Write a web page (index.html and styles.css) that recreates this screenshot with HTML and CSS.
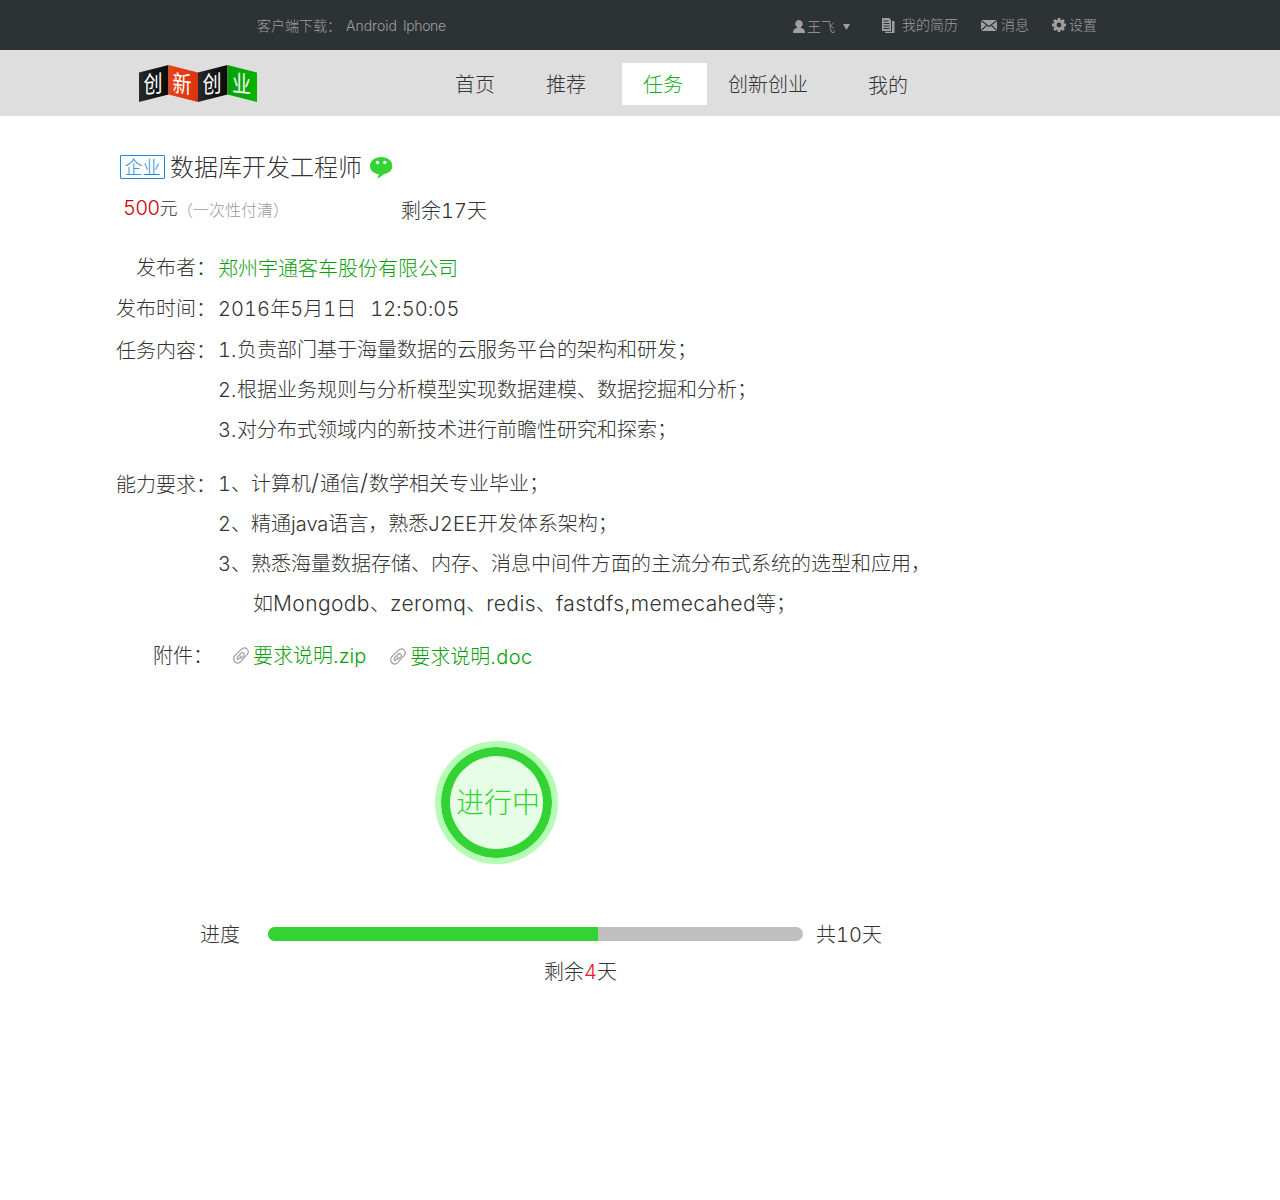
FILE: index.html
```html
<!DOCTYPE html>
<html lang="zh-CN">
<head>
<meta charset="utf-8">
<title>创新创业</title>
<link rel="stylesheet" href="styles.css">
</head>
<body>
<header class="topbar">
  <div class="download"><span>客户端下载：</span><span class="android">Android</span><span class="iphone">Iphone</span></div>
  <div class="user-links">
    <a class="user"><svg width="12" height="13" viewBox="0 0 12 13"><path d="M6 0a3.800 3.800 0 0 1 2.300 6.800Q7.500 7.500 8 8c2.800.5 4 2 4 5H0c0-3 1.200-4.500 4-5q.5-.5-.3-1.200A3.800 3.800 0 0 1 6 0z"/></svg><span>王飞</span><svg class="caret" width="7" height="6" viewBox="0 0 7 6"><path d="M0 0h7L3.500 6z"/></svg></a>
    <a class="resume"><svg width="13" height="15" viewBox="0 0 13 15"><path d="M0 0h7l2 2v11H0z"/><path d="M10 3h2.500v12H3v-1.200h7z"/><path class="cut" d="M1.500 3h5M1.500 5.500h6M1.500 8h6M1.500 10.500h6"/></svg><span>我的简历</span></a>
    <a class="message"><svg width="16" height="11" viewBox="0 0 16 11"><path d="M0 0h16v11H0z"/><path class="cut" d="M0 .5l8 6 8-6M0 10.500l5.500-5M16 10.500l-5.500-5"/></svg><span>消息</span></a>
    <a class="settings"><svg width="14" height="14" viewBox="-7 -7 14 14"><circle class="ring" r="3.900"/><path class="teeth" d="M0-7v3M0 4v3M-7 0h3M4 0h3M-5-5l2 2M3 3l2 2M5-5l-2 2M-3 3l-2 2"/></svg><span>设置</span></a>
  </div>
</header>
<nav class="nav">
  <svg class="logo" width="118" height="37" viewBox="0 0 118 37">
    <defs>
      <linearGradient id="black"><stop offset="0" stop-color="#2a2a2a"/><stop offset=".5" stop-color="#161616"/><stop offset="1" stop-color="#0c0c0c"/></linearGradient>
      <linearGradient id="red"><stop offset="0" stop-color="#ec4317"/><stop offset="1" stop-color="#d93410"/></linearGradient>
      <linearGradient id="green"><stop offset="0" stop-color="#08a008"/><stop offset="1" stop-color="#04b404"/></linearGradient>
    </defs>
    <path fill="url(#black)" d="M0 7.500L29.500 0v29.500L0 37z"/>
    <path fill="url(#red)" d="M29.500 0L59 7.500V37l-29.500-7.500z"/>
    <path fill="url(#black)" d="M59 7.500L88.500 0v29.500L59 37z"/>
    <path fill="url(#green)" d="M88.500 0L118 7.500V37l-29.500-7.500z"/>
    <text transform="matrix(.95 -.1 0 1.180 4.500 28.500)">创</text>
    <text transform="matrix(.95 .1 0 1.180 33.500 26.500)">新</text>
    <text transform="matrix(.95 -.1 0 1.180 63.500 28.500)">创</text>
    <text transform="matrix(.95 .1 0 1.180 93 26.500)">业</text>
  </svg>
  <a class="home">首页</a><a class="recommend">推荐</a><a class="active">任务</a><a class="startup">创新创业</a><a class="mine">我的</a>
</nav>
<main class="detail">
  <h1 class="title"><span class="tag">企业</span><span>数据库开发工程师</span>
    <svg class="wechat" width="23" height="23" viewBox="0 0 23 23"><path d="M11.200 0C17.500 0 22.300 3.800 22.300 8.700s-3.300 7.500-8.300 8.300L7.500 22l1.300-4.700C3.500 16.500 0 13.500 0 8.700 0 3.800 5 0 11.200 0z"/><circle cx="7.500" cy="5.500" r="1.700"/><circle cx="14.800" cy="5.500" r="1.700"/></svg>
  </h1>
  <div class="price"><span class="amount"><em class="num">500</em>元</span><span class="note">（一次性付清）</span><span class="remain">剩余<span class="num">17</span>天</span></div>
  <dl class="facts">
    <dt>发布者：</dt><dd class="company">郑州宇通客车股份有限公司</dd>
    <dt class="when">发布时间：</dt><dd class="when"><span class="num">2016</span>年<span class="num">5</span>月<span class="num">1</span>日<span class="num time">12:50:05</span></dd>
    <dt class="low">任务内容：</dt>
    <dd><p><span class="idx num">1.</span>负责部门基于海量数据的云服务平台的架构和研发；</p><p><span class="idx num">2.</span>根据业务规则与分析模型实现数据建模、数据挖掘和分析；</p><p><span class="idx num">3.</span>对分布式领域内的新技术进行前瞻性研究和探索；</p></dd>
    <dt class="skill low-skill">能力要求：</dt>
    <dd class="skill"><p><span class="num">1</span>、计算机<span class="slash">/</span>通信<span class="slash">/</span>数学相关专业毕业；</p><p><span class="num">2</span>、精通<span class="java">java</span>语言，熟悉<span class="j2ee">J2EE</span>开发体系架构；</p><p><span class="num">3</span>、熟悉海量数据存储、内存、消息中间件方面的主流分布式系统的选型和应用，</p><p class="indent">如<span class="word">Mongodb</span>、<span class="word">zeromq</span>、<span class="word">redis</span>、<span class="word">fastdfs,memecahed</span>等；</p></dd>
    <dt class="attach">附件：</dt>
    <dd class="attach">
      <a><svg width="18" height="18" viewBox="0 0 18 18"><path d="M2.600 8.800L9.500 2.200c3.800-3.400 8.900.9 5.700 5.200l-6.500 7.200c-3.700 3.600-9-.6-6.100-5.800zM6 12.700c-1.200-.8-.8-2.400.2-3.500l2.400-2.600c2.500-2.200 4.600.2 3.100 2.200l-2 2.100c-1.200.8-2.200-.4-1.300-1.400l.8-.8M6 12.700l1.500-1.500"/></svg><span>要求说明.zip</span></a>
      <a class="doc"><svg width="18" height="18" viewBox="0 0 18 18"><path d="M2.600 8.800L9.500 2.200c3.800-3.400 8.900.9 5.700 5.200l-6.500 7.200c-3.700 3.600-9-.6-6.100-5.800zM6 12.700c-1.200-.8-.8-2.400.2-3.500l2.400-2.600c2.500-2.200 4.600.2 3.100 2.200l-2 2.100c-1.200.8-2.200-.4-1.300-1.400l.8-.8M6 12.700l1.500-1.500"/></svg><span>要求说明<span class="ext">.doc</span></span></a>
    </dd>
  </dl>
  <div class="status">进行中</div>
  <div class="progress"><span class="caption">进度</span><div class="track"><div class="fill" style="width:330px"></div></div><span class="caption">共<span class="num">10</span>天</span></div>
  <div class="left-days">剩余<em class="num">4</em>天</div>
</main>
</body>
</html>
```
FILE: styles.css
```css
* { box-sizing: border-box; }
body {
  margin: 0;
  background: #fff;
  color: #333;
  font: 300 20px/40px Inter, "Noto Sans CJK SC", sans-serif;
}
p, h1, dl, dd { margin: 0; }
p { height: 40px; white-space: nowrap; }
em { font-style: normal; color: #d00000; }
svg { display: block; flex: none; }
.num { font-variant-numeric: tabular-nums; letter-spacing: .1px; }

.topbar {
  display: flex;
  height: 50px;
  padding: 1px 0 0 257px;
  background: #2d3235;
  color: #a09f9f;
  font-size: 14px;
  line-height: 50px;
}
.download { display: flex; width: 536px; }
.android { width: 57px; margin-left: 5px; }
.iphone { letter-spacing: -.4px; }
.user-links { display: flex; line-height: 48px; }
.user-links a { display: flex; align-items: center; height: 48px; }
.user-links svg { fill: #a09f9f; }
.user-links .cut { fill: none; stroke: #2d3235; stroke-width: 1.100; }
.user { width: 89px; gap: 2px; padding-top: 3px; }
.user .caret { margin-left: 6px; }
.resume { width: 99px; gap: 7px; }
.message { width: 71px; gap: 4px; }
.settings { gap: 3px; }
.settings .ring { fill: none; stroke: #a09f9f; stroke-width: 3; }
.settings .teeth { stroke: #a09f9f; stroke-width: 2.800; }

.nav {
  display: flex;
  height: 66px;
  padding: 13px 0 0 139px;
  background: #dedede;
  line-height: 44px;
}
.logo { margin-top: 2px; overflow: visible; }
.logo text { font: 400 20px/1 "Noto Sans CJK SC", sans-serif; fill: #fff; }
.home { margin-left: 198px; }
.recommend { margin-left: 51px; }
.active { width: 85px; height: 42px; margin-left: 36px; padding-left: 21px; background: #fff; color: #12ad12; }
.startup { margin-left: 21px; }
.mine { margin: 1px 0 0 60px; }

.detail { padding: 31px 0 0 116px; }
.title { display: flex; align-items: center; height: 40px; padding-left: 4px; font-size: 24px; font-weight: 300; line-height: 42px; }
.title > span + span { padding-top: 2px; }
.tag { width: 45px; height: 24px; margin-right: 5px; border: 1px solid #1c8ad8; border-radius: 1px; color: #1c8ad8; font-size: 18px; line-height: 24px; text-align: center; }
.wechat { margin: 2px 0 0 8px; fill: #33d333; }
.wechat circle { fill: #fff; }
.price { display: flex; height: 40px; padding-left: 7px; }
.amount { width: 55px; font-size: 18px; line-height: 43px; white-space: nowrap; }
.amount em { font-size: 20px; letter-spacing: -.8px; }
.note { width: 223px; color: #999; font-size: 16px; line-height: 46px; text-indent: -1px; }
.remain { line-height: 48px; }

.facts { display: grid; grid-template-columns: 100px 1fr; column-gap: 2px; padding-top: 21px; }
.facts dt { height: 40px; text-align: right; white-space: nowrap; }
.facts .company { height: 41px; padding-top: 1px; }
.facts .company, .attach { color: #0a9f0a; }
.facts .when { height: 41px; }
.time { margin-left: 14px; }
.idx { display: inline-block; width: 19px; }
.facts .low { padding-top: 1px; }
.facts .skill { padding-top: 14px; }
.facts .low-skill { padding-top: 15px; }
.slash { display: inline-block; width: 9px; font-size: 23px; line-height: 1; }
.word { font-size: 21px; line-height: 1; letter-spacing: .4px; }
.j2ee { letter-spacing: .5px; }
.indent { padding-left: 35px; }
.facts dt.attach { height: 52px; padding: 12px 3px 0 0; color: #333; }
.facts dd.attach { display: flex; height: 52px; padding: 12px 0 0 14px; }
.attach a { display: flex; align-items: center; height: 40px; gap: 3px; }
.attach svg { fill: none; stroke: #999; stroke-width: 1.100; }
.attach .doc { margin-left: 23px; padding-top: 2px; }
.ext { letter-spacing: .4px; }

.status {
  width: 123px;
  height: 123px;
  margin: 65px 0 0 319px;
  padding-left: 3px;
  border: 6px solid #b5fdb5;
  border-radius: 50%;
  background: #e6fde6;
  box-shadow: inset 0 0 0 9px #33d333;
  color: #33d333;
  font-size: 28px;
  line-height: 112px;
  text-align: center;
}
.progress { display: flex; align-items: center; height: 40px; margin-top: 50px; padding-left: 84px; }
.caption { padding-top: 2px; }
.track { width: 535px; height: 14px; margin: 0 13px 0 28px; border-radius: 7px; background: #bfbfbf; overflow: hidden; }
.fill { height: 100%; background: #33d333; }
.left-days { margin-left: 428px; line-height: 36px; }
.left-days em { color: #f01818; }
```
